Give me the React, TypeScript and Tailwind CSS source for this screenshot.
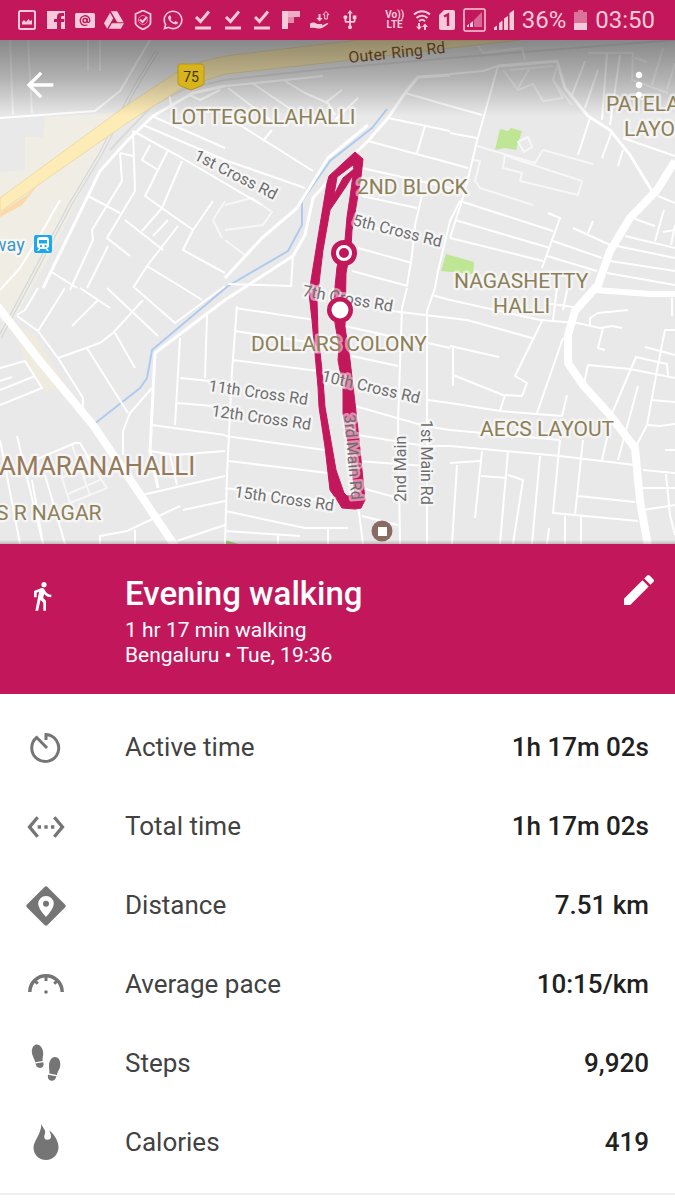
import * as React from "react"
import {
  MdArrowBack,
  MdDirectionsWalk,
  MdEdit,
  MdMoreVert,
  MdSettingsEthernet,
  MdUsb,
} from "react-icons/md"
import { FaGoogleDrive, FaWhatsapp } from "react-icons/fa"

/* Status bar */

function CheckLine() {
  return (
    <svg viewBox="0 0 20 20" className="h-5 w-5">
      <path d="M3 7l4.500 4.500L16 1.500" fill="none" stroke="currentColor" strokeWidth="3" />
      <path d="M2 16.500h16v3H2z" fill="currentColor" />
    </svg>
  )
}

function StatusNotifications() {
  return (
    <div className="flex w-[344px] items-center justify-between">
      <svg viewBox="0 0 20 20" className="h-5 w-5">
        <rect x="2" y="1" width="16" height="18" rx="1.5" fill="none" stroke="currentColor" strokeWidth="2" />
        <path d="M5 14.500V12l2-2 2 2 2.500-3L13 11l2-1v4.500z" fill="currentColor" />
      </svg>
      <svg viewBox="0 0 20 20" className="h-5 w-5">
        <path
          d="M1 1h18v18h-4v-7h3l.5-3H15V7.500c0-1 .4-1.500 1.500-1.500H18V3h-3c-3 0-4 1.500-4 4v2H8v3h3v7H1z"
          fill="currentColor"
        />
      </svg>
      <svg viewBox="0 0 20 20" className="h-5 w-5">
        <rect x="0" y="3" width="20" height="15" rx="1.500" fill="currentColor" />
        <circle cx="10" cy="10.500" r="2" fill="none" stroke="#c2185b" strokeWidth="1.400" />
        <path
          d="M12.200 8.300v3c0 1.700 2.600 1.400 2.600-.8a4.800 4.800 0 1 0-2.400 4.200"
          fill="none"
          stroke="#c2185b"
          strokeWidth="1.300"
        />
      </svg>
      <FaGoogleDrive className="h-5 w-5" />
      <svg viewBox="0 0 20 20" className="h-5 w-5" fill="none" stroke="currentColor">
        <path d="M10 0.500l7.500 3.500v9c0 3-5 5-7.500 6.500C7.500 18 2.500 16 2.500 13V4z" strokeWidth="1.800" />
        <circle cx="10" cy="10" r="4.500" strokeWidth="1" opacity=".6" />
        <path d="M7 9.500l2.500 2.500 4.500-5" strokeWidth="2" />
      </svg>
      <FaWhatsapp className="h-[22px] w-[22px]" />
      <CheckLine />
      <CheckLine />
      <CheckLine />
      <svg viewBox="0 0 20 20" className="h-5 w-5" fill="currentColor">
        <path d="M1 1h6v18H1z" />
        <path d="M7 1h12v6H7z" opacity=".85" />
        <path d="M7 7h6v6H7z" opacity=".65" />
      </svg>
      <svg viewBox="0 0 20 20" className="h-5 w-5" fill="currentColor">
        <path d="M8.500 4h2v4h2.200l-3.200 3.500L6.300 8h2.200z" />
        <path d="M16 1.500l3 3.200h-1.700V9h-2.600V4.700H13z" fill="none" stroke="currentColor" strokeWidth="1" />
        <path d="M0 13.500c3-1.500 5-1 7 .5h4.500c1 0 1 1.300 0 1.500H9c2.500.5 4-.5 8.500-2.500.8 0 1 .8.300 1.300-3.500 2.700-5.500 4.200-8.300 4.200-3 0-4-1.500-9.500-.5z" />
      </svg>
      <MdUsb className="h-[22px] w-[22px]" />
    </div>
  )
}

function StatusSystem() {
  return (
    <div className="flex items-center gap-2 text-2xl leading-7">
      <div className="w-5 text-center text-[10px] font-bold leading-[10px]">
        <div className="whitespace-nowrap">Vo))</div>
        <div>LTE</div>
      </div>
      <svg viewBox="0 0 18 20" className="h-5 w-[18px]" fill="none" stroke="currentColor">
        <path d="M1 4.500c4.500-4.500 11.500-4.500 16 0M3.500 8c3-3 8-3 11 0M6 11.200c1.800-1.800 4.200-1.800 6 0" strokeWidth="2" />
        <path d="M6 13v4M12 20v-4" strokeWidth="2" />
        <path d="M3 16.500h6L6 20zM9 17h6l-3-3.500z" fill="currentColor" stroke="none" />
      </svg>
      <svg viewBox="0 0 16 20" className="h-5 w-4">
        <path d="M5 0h9a2 2 0 0 1 2 2v16a2 2 0 0 1-2 2H2a2 2 0 0 1-2-2V5z" fill="currentColor" />
        <path d="M5 6.500L9 4.500V16" fill="none" stroke="#c2185b" strokeWidth="2.400" />
      </svg>
      <svg viewBox="0 0 23 24" className="h-6 w-[23px]" fill="currentColor">
        <rect x="1" y="1" width="21" height="22" rx="1.500" fill="none" stroke="currentColor" strokeWidth="1.500" />
        <path d="M19 4v15h-8v-7z" opacity=".45" />
        <path d="M4 17.500l2-1.500v3H4zM7 15.500l3-2.500v6H7z" />
      </svg>
      <svg viewBox="0 0 20 20" className="h-5 w-5" fill="currentColor">
        <path d="M0 17.500l3-2V20H0zM5 13l3.500-2.500V20H5zM10 8.500L14 6v14h-4zM15.500 3L20 0v20h-4.500z" />
      </svg>
      <span>36%</span>
      <svg viewBox="0 0 13 20" className="h-5 w-[13px]" fill="currentColor">
        <path d="M4 0h5v2h4v11H0V2h4z" opacity=".5" />
        <path d="M0 13h13v7H0z" />
      </svg>
      <span>03:50</span>
    </div>
  )
}

/* Map */

const minorRoads = [
  "M0 118L95 111L120 91L150 40",
  "M133 131L135 191L107 238L130 256M120 153L122 181L92 230L93 240L70 290M120 153L133 156M88 196L120 213",
  "M133 131L182 158L262 205M143 125L225 160L305 188M152 116L225 148M150 145L142 160L158 170",
  "M168 150L145 196L193 230L213 201M182 161L162 208L142 231M125 220L163 250M168 220L153 236",
  "M178 226L147 266L133 288M193 230L183 250L225 273M147 266L183 288M108 246L87 288M50 271L77 288",
  "M60 200L43 230L20 268L0 290M169 93L171 105M190 95L200 100L220 90",
  "M225 86L285 80L323 76M252 83L292 110M228 88L270 120M285 81L305 93L328 103L335 115",
  "M342 90L325 103M358 98L335 120M232 120L313 171M272 130L263 141M405 93L450 106M388 118L450 131",
  "M425 126L417 153M368 141L450 163L468 168M362 168L450 188M362 196L417 208M422 195L415 225L412 255L407 286",
  "M355 224L415 236M358 248L412 263M352 271L408 286M460 201L450 221L438 271L435 288M293 256L291 286L228 284",
  "M498 66L477 141L465 191L450 238M585 61L572 95M598 70L585 108M607 53L602 120M620 55L610 125",
  "M590 118L578 155M612 131L602 158M623 150L618 166",
  "M623 138L675 156M450 106L482 115M450 133L477 138M460 201L553 231",
  "M548 213L560 218L542 268M455 220L550 248M450 238L543 261M553 241L602 258M547 256L597 271M573 228L610 245M593 221L588 233",
  "M658 196L675 203M635 219L655 226M664 210L655 241M625 236L675 248M617 246L675 258M610 261L675 271M607 273L675 285M675 230L663 232M675 225L671 245",
  "M450 300L540 320L577 323L600 328L612 326L622 328M450 318L467 320L532 338M542 321L515 376L527 383L522 396L503 395L453 375",
  "M563 338L537 413M450 346L499 357M453 348V386M505 395L500 411M450 403L500 411L562 416L567 395M450 430L560 440M450 446L560 456L635 465",
  "M450 463L480 461M482 451L475 518M481 476L507 478M508 451L500 544M508 475L523 480L513 544M540 456L532 544",
  "M560 440L553 513L638 521M583 440L575 515M565 516V544M581 516V544M549 528L547 544M578 496L635 502M457 465L452 544",
  "M583 388L588 365L630 369L675 378M613 411L636 357L667 364L668 376M675 330H665L658 365L647 425L635 448M638 386L618 460",
  "M613 411L602 460M645 347L675 355M651 400L675 402M647 425L660 426L675 424M643 470L675 473M643 488H675M643 510L675 505M666 474L670 515L675 535",
  "M590 325V318L598 313L628 310M603 328L598 348L605 350M672 298V316M557 288L553 320M567 290L563 310M545 303L580 308M665 450H675",
  "M237 306L232 371L227 475L225 544M235 308L315 320M235 331L315 343M233 360L318 371M225 436L325 450M228 461L328 473M225 488L335 502",
  "M345 326L398 338M352 356L398 366M355 406L425 426L450 430M358 435L425 446H450M358 461L425 466M362 488L398 498M392 311L450 318",
  "M407 288L402 308L398 421L400 544M435 288L427 311V544M432 295L450 300M428 343L450 348M428 400L450 403",
  "M225 511L305 528H348M225 531L300 536M358 505L363 544M328 528V544M278 536V544M362 516L398 525",
  "M17 316L38 331L58 358L83 398V415M17 315L25 310L38 288M65 288L38 331M80 288L110 308M98 300L72 326M107 288L158 336",
  "M135 288L175 323L225 286M183 288L202 300M143 300L113 333L100 343L58 358M115 333L135 368M87 348L128 413",
  "M152 388L130 413L123 431V455M180 338L175 425M207 315L205 378M180 378L210 381M177 403L213 406",
  "M152 425L225 435M150 451L175 455L225 451M142 495L225 476M170 455L177 485M183 510L225 501M180 506L127 531L100 536V544M177 541L225 525M135 530V544",
  "M0 368L25 361L42 388L0 405M0 390L35 376M0 381L12 377M0 440L20 544M17 436L43 544M32 480L43 544M45 475L65 544",
  "M35 460L75 443H80L90 460",
]

const faintRoads = [
  "M10 40L13 115M28 40L32 113M88 40V71M100 40V71",
  "M478 46L483 53L522 48L525 60M503 70L518 90L533 84L543 101L563 98L553 80L557 66M510 70L553 66M518 88L530 68",
  "M588 53H633L632 80L668 93M635 58L647 62M663 48L652 85M675 63L667 90",
  "M473 160L480 161L475 181L480 188L533 205",
  "M553 80L572 105M477 146L535 163L543 150L593 164M505 155L503 168L522 173L520 181L578 195L582 181L512 158Z",
  "M225 205L252 198L272 212L263 225L225 230M225 201L213 220L222 238M225 240L245 255M518 142L528 137L532 147L524 152Z",
  "M85 455L107 488L70 503L62 478L88 465M72 445L90 495M68 494L100 480",
]

const areaLabels = [
  { text: "LOTTEGOLLAHALLI", x: 171, y: 124 },
  { text: "2ND BLOCK", x: 357, y: 194 },
  { text: "NAGASHETTY", x: 454, y: 288 },
  { text: "HALLI", x: 493, y: 313 },
  { text: "DOLLARS COLONY", x: 251, y: 351 },
  { text: "AECS LAYOUT", x: 480, y: 436 },
  { text: "PATELA", x: 606, y: 111 },
  { text: "LAYO", x: 624, y: 136 },
  { text: "S R NAGAR", x: -4, y: 520 },
]

const roadLabels = [
  { text: "1st Cross Rd", x: 193, y: 159, angle: 27 },
  { text: "5th Cross Rd", x: 352, y: 225, angle: 14 },
  { text: "7th Cross Rd", x: 302, y: 296, angle: 10 },
  { text: "10th Cross Rd", x: 321, y: 381, angle: 13 },
  { text: "11th Cross Rd", x: 208, y: 391, angle: 8 },
  { text: "12th Cross Rd", x: 211, y: 416, angle: 8 },
  { text: "15th Cross Rd", x: 234, y: 497, angle: 8 },
  { text: "3rd Main Rd", x: 344, y: 415, angle: 85 },
  { text: "2nd Main", x: 406, y: 502, angle: -90 },
  { text: "1st Main Rd", x: 421, y: 420, angle: 90 },
]

// outer edge of the walked loop, then the two gaps inside it
const routeShape = [
  "M355 152L363 159L361 177L355 213L352 230L351 247L346 273L345 327L350 360L355 403L358 430L365 500L361 508L355 509L342 508L337 500L330 490L325 447L319 407L318 387L312 320L309 293L318 237L327 183L329 176Z",
  "M353 165L337 177L334 195L343 178L354 169Z",
  "M353 175L345 188L330 210L323 250L317 300L318 333L323 380L325 407L332 447L336 470L344 493L347 496L355 495L351 460L343 413V387L338 360L339 347L335 323L334 297L337 267L345 240L347 217L350 197Z",
].join("")

function RouteMap() {
  return (
    <svg viewBox="0 40 675 504" className="block w-full font-[Roboto,sans-serif]" role="img" aria-label="Route map">
      <defs>
        <linearGradient id="scrim" x1="0" y1="0" x2="0" y2="1">
          <stop offset="0" stopOpacity=".42" />
          <stop offset=".5" stopOpacity=".24" />
          <stop offset="1" stopOpacity="0" />
        </linearGradient>
      </defs>
      <rect y="40" width="675" height="504" fill="#e9e9e9" />

      {/* land */}
      <path d="M45 117L118 112L100 155L45 265L8 330L0 320V172L25 170V137H43Z" fill="#efede4" />
      <path d="M15 325L35 335L65 385L45 392L25 365Z" fill="#efebdf" />
      <path d="M500 129L508 131L511 128L522 131L516 150L505 148L495 150Z" fill="#bfe695" />
      <path d="M446 254L474 262L473 274L441 271Z" fill="#bfe695" />
      <path d="M225 540L238 544H225Z" fill="#a6cf7a" />

      {/* rail */}
      <path d="M157 51L133 91L100 155L70 205L30 281L0 337" fill="none" stroke="#d4d4d4" strokeWidth="4" />
      <path d="M157 51L133 91L100 155L70 205L30 281L0 337" fill="none" stroke="#ebebe8" strokeWidth="2" />
      <path d="M110 150L125 134L153 105L185 89L225 80L325 69L450 58L675 40" fill="none" stroke="#dadada" strokeWidth="2" />

      {/* creek */}
      <path
        d="M387 109L372 128L330 161L302 201V225L288 251L228 286L152 350L147 378L140 388L93 425"
        fill="none"
        stroke="#aecbef"
        strokeWidth="2"
      />

      {/* roads */}
      <g fill="none" stroke="#fff" strokeLinejoin="round">
        <g stroke="#f7f7f7" strokeWidth="2">
          {faintRoads.map((d) => (
            <path key={d} d={d} />
          ))}
        </g>
        <g strokeWidth="2">
          {minorRoads.map((d) => (
            <path key={d} d={d} />
          ))}
        </g>
        <g strokeWidth="3">
          <path d="M225 86L193 93L153 116L127 141L100 171L88 196L43 288" />
          <path d="M450 75L418 77L405 93L388 118L368 141L337 171L313 198L305 235L293 256L225 300L155 353L150 451L158 488" />
          <path d="M368 125L328 158L297 208L262 238L225 278" />
          <path d="M498 66L557 61L565 88L588 116L610 130L630 155L652 191" />
        </g>
        <path d="M450 74L483 71L498 66" strokeWidth="2" />
        <path d="M675 161L657 190L630 218L610 251L597 288" strokeWidth="8" />
        <path d="M597 286L575 311L568 335V363L583 385L610 415L635 448L640 501L648 546" strokeWidth="8" />
        <path d="M595 290L650 294H675" strokeWidth="6" />
        <path d="M-5 303L40 361L93 425L127 475L175 546" strokeWidth="8" />
      </g>

      {/* highway */}
      <path
        d="M0 198L127 105L177 72L200 62L225 56L358 40H520L450 48L325 63L225 74L182 88L127 123L38 185L0 212Z"
        fill="#fdecb6"
        stroke="#e9dba9"
      />
      <path d="M0 213L24 197L38 185L22 205L0 217Z" fill="#fbd9a8" />

      <rect y="40" width="675" height="76" fill="url(#scrim)" />

      {/* walked route */}
      <path d={routeShape} fill="#c2185b" fillRule="evenodd" stroke="#c2185b" strokeLinejoin="round" />

      {/* place names */}
      <g stroke="#fff" strokeOpacity=".5" strokeWidth="5" strokeLinejoin="round" style={{ paintOrder: "stroke" }}>
        <g fontSize="21" fill="#8d8058">
          {areaLabels.map((label) => (
            <text key={label.text} x={label.x} y={label.y}>
              {label.text}
            </text>
          ))}
        </g>
        <text x="-1" y="475" fontSize="26" fill="#967a5b">
          AMARANAHALLI
        </text>
        <g fontSize="16" fill="#6e6e6e">
          {roadLabels.map((label) => (
            <text key={label.text} transform={`translate(${label.x} ${label.y}) rotate(${label.angle})`}>
              {label.text}
            </text>
          ))}
        </g>
        <text x="-7" y="251" fontSize="18" fill="#3c97cb">
          way
        </text>
      </g>
      <text transform="translate(349 63) rotate(-6)" fontSize="16" fill="#563b1c">
        Outer Ring Rd
      </text>

      {/* highway shield */}
      <path d="M180 64H201Q204 64 204 67V83Q204 85 201 86L191 90L181 86Q178 85 178 83V67Q178 64 180 64Z" fill="#d8b51d" stroke="#b4951b" />
      <text x="191" y="82" fontSize="14" textAnchor="middle" fill="#3c3310">
        75
      </text>

      {/* station */}
      <rect x="34" y="235" width="18" height="18" rx="2" fill="#1aa9ee" />
      <path
        d="M40 237H46Q49 237 49 240V246Q49 248 47 248L49 251H47L46 249H40L39 251H37L39 248Q37 248 37 246V240Q37 237 40 237ZM39 240V243.500H47V240ZM40 245.200V247H42V245.200ZM44.500 245.200V247H46.500V245.200Z"
        fill="#fff"
        fillRule="evenodd"
      />

      {/* markers */}
      <circle cx="344" cy="253" r="13" fill="#c2185b" />
      <circle cx="344" cy="253" r="6.500" fill="none" stroke="#fff" strokeWidth="3" />
      <circle cx="340" cy="310" r="13" fill="#c2185b" />
      <circle cx="340" cy="310" r="8.500" fill="#fff" />
      <circle cx="382" cy="531" r="10.500" fill="#8a6b61" />
      <rect x="378" y="527" width="9" height="9" fill="#fff" />
    </svg>
  )
}

/* Stat icons */

function ActiveTimeIcon() {
  return (
    <svg viewBox="0 0 40 40" className="h-10 w-10" fill="none" stroke="currentColor" strokeWidth="3">
      <path d="M20 12V6.500A13.500 13.500 0 1 1 10.700 9.500L21 20" />
    </svg>
  )
}

function DistanceIcon() {
  return (
    <svg viewBox="0 0 40 40" className="h-10 w-10" fill="currentColor" fillRule="evenodd">
      <path d="M18.500 1q1.500-1.500 3 0L39 18.500q1.500 1.500 0 3L21.500 39q-1.500 1.500-3 0L1 21.500q-1.500-1.500 0-3zM20 10a7.800 7.800 0 0 0-7.800 7.800C12.200 23 20 31 20 31s7.800-8 7.800-13.200A7.800 7.800 0 0 0 20 10zM20 14.800a3 3 0 1 1 0 6 3 3 0 0 1 0-6z" />
    </svg>
  )
}

function PaceIcon() {
  return (
    <svg viewBox="0 0 40 40" className="h-10 w-10" fill="none" stroke="currentColor" strokeWidth="3.500">
      <path d="M3.800 27a16.200 16.200 0 0 1 32.400 0" />
      <path d="M20 12v4M8.500 15.500l3.300 3.300M31.500 15.500l-3.300 3.300" strokeWidth="3" />
      <circle cx="20" cy="27" r="1.800" fill="currentColor" stroke="none" />
    </svg>
  )
}

function StepsIcon() {
  return (
    <svg viewBox="0 0 40 40" className="h-10 w-10" fill="currentColor">
      <path d="M10.500.5C14.500.3 17.400 5 17.200 10c-.2 3-.8 4-.6 7l-7.400 1.300C8.800 15 6 12 5.800 8c0-4 1.700-7.200 4.700-7.500z" />
      <path d="M9.500 19.600l7.700-1.300c1.300 3.200-.7 5.500-3 5.700-2.400.2-4.400-1.500-4.700-4.400z" />
      <path d="M29 13c4 .2 5.500 4 5.300 8-.3 4.500-2.800 6-3.300 10l-7.700-1.400C23.600 27 23 25 23 22c0-5 2.500-9.200 6-9z" />
      <path d="M22 30.800l8.300 1.400c-.3 2.800-2.300 4.800-5.100 4.500-2.700-.4-3.900-2.700-3.200-5.900z" />
    </svg>
  )
}

function CaloriesIcon() {
  return (
    <svg viewBox="0 0 40 40" className="h-10 w-10" fill="currentColor">
      <path d="M15.300.8C16 4 19.500 6.500 19.200 9.500c-.2 2-1.200 3-.9 5 .3 1.500 1.600 2.300 3.200 2.300 2 0 3.500-1.300 3.500-3.300 0-2.500-1-3.500-1.700-6 5 3.500 9.200 11 9.200 16.500 0 7.300-5.300 13-12.500 13S7.500 31.500 7.500 24.500C7.500 18 15.500 11 15.300.8z" />
    </svg>
  )
}

const stats = [
  { icon: <ActiveTimeIcon />, label: "Active time", value: "1h 17m 02s" },
  { icon: <MdSettingsEthernet className="h-10 w-10" />, label: "Total time", value: "1h 17m 02s" },
  { icon: <DistanceIcon />, label: "Distance", value: "7.51 km" },
  { icon: <PaceIcon />, label: "Average pace", value: "10:15/km" },
  { icon: <StepsIcon />, label: "Steps", value: "9,920" },
  { icon: <CaloriesIcon />, label: "Calories", value: "419" },
]

export default function App() {
  return (
    <main className="min-h-screen bg-white font-[Roboto,sans-serif]">
      <div className="flex h-10 items-center justify-between bg-[#c2185b] pl-[17px] pr-5 text-[#f6cad9]">
        <StatusNotifications />
        <StatusSystem />
      </div>

      <section className="relative">
        <RouteMap />
        <div className="absolute inset-x-0 top-0 flex h-[90px] items-center justify-between pl-5 pr-4 text-white">
          <button type="button" aria-label="Back">
            <MdArrowBack className="h-10 w-10" />
          </button>
          <button type="button" aria-label="More options">
            <MdMoreVert className="h-10 w-10" />
          </button>
        </div>
        <div className="absolute inset-x-0 bottom-0 h-1 bg-linear-to-b from-black/0 to-black/20" />
      </section>

      <header className="flex items-start bg-[#c2185b] pb-[26px] pr-4 pt-[30px] text-white">
        <div className="w-[125px] shrink-0 pl-[26px] pt-[6px]">
          <MdDirectionsWalk className="h-8 w-8" />
        </div>
        <div className="grow">
          <h1 className="pb-[4px] text-[33px] font-medium leading-[40px]">Evening walking</h1>
          <p className="text-[21px] leading-[25px]">1 hr 17 min walking</p>
          <p className="text-[21px] leading-[25px]">Bengaluru • Tue, 19:36</p>
        </div>
        <button type="button" aria-label="Edit activity" className="-mt-1">
          <MdEdit className="h-10 w-10" />
        </button>
      </header>

      <dl className="border-b-2 border-[#eeeeee] pb-[11px] pt-[14px]">
        {stats.map((stat) => (
          <div key={stat.label} className="flex h-[79px] items-center pr-[26px] text-[26px]">
            <dt className="flex grow items-center text-[#424242]">
              <span className="w-[125px] pl-[26px] text-[#757575]">{stat.icon}</span>
              {stat.label}
            </dt>
            <dd className="font-medium text-[#212121]">{stat.value}</dd>
          </div>
        ))}
      </dl>
    </main>
  )
}
